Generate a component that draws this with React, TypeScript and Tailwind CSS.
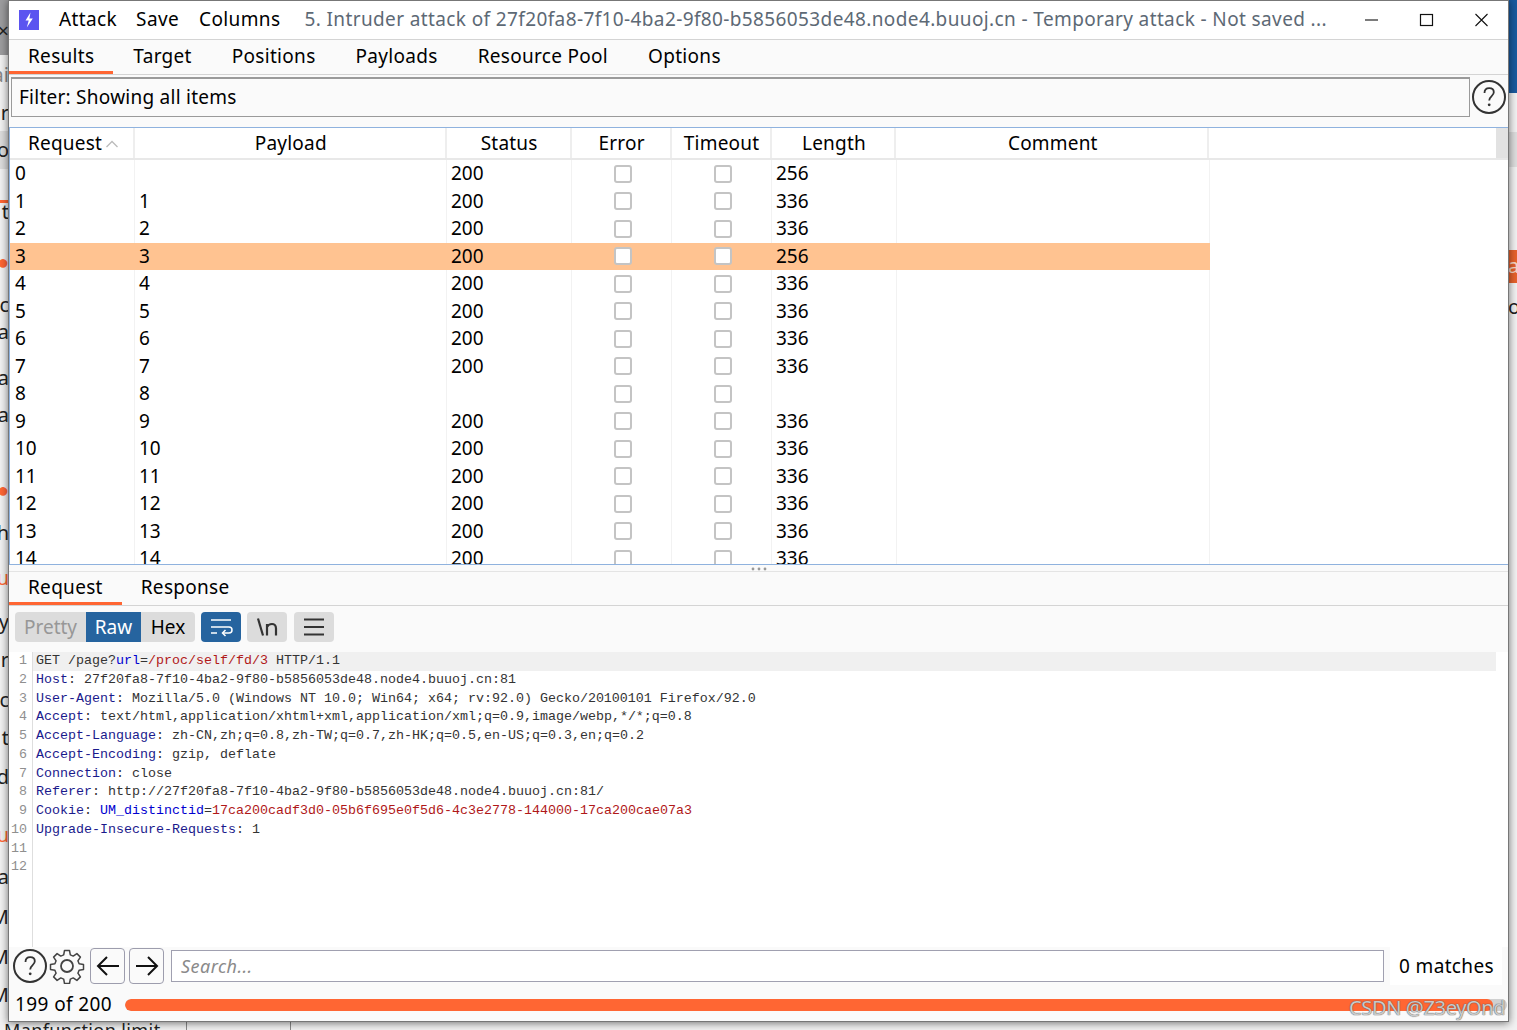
import React from "react";

const SANS = "font-['Noto_Sans','Open_Sans',sans-serif]";

const HelpIcon = () => (
  <svg width="36" height="36" viewBox="0 0 36 36" fill="none" className="shrink-0">
    <circle cx="18" cy="18" r="16" stroke="#333" strokeWidth="2" />
    <path d="M13.5 14c0-3 2-4.8 4.7-4.8 2.8 0 4.6 1.7 4.6 4.1 0 3.7-4.6 3.9-4.6 8.2" stroke="#333" strokeWidth="1.8" />
    <circle cx="18.2" cy="25.8" r="1.4" fill="#333" />
  </svg>
);

const GearIcon = () => (
  <svg width="36" height="36" viewBox="0 0 36 36" fill="none" className="shrink-0">
    <path
      d="M15.5 2.5h5l.8 4.4 2.9 1.2 3.7-2.5 3.5 3.5-2.5 3.7 1.2 2.9 4.4.8v5l-4.4.8-1.2 2.9 2.5 3.7-3.5 3.5-3.7-2.5-2.9 1.2-.8 4.4h-5l-.8-4.4-2.9-1.2-3.7 2.5-3.5-3.5 2.5-3.7-1.2-2.9-4.4-.8v-5l4.4-.8 1.2-2.9-2.5-3.7 3.5-3.5 3.7 2.5 2.9-1.2z"
      stroke="#444"
      strokeWidth="1.5"
      strokeLinejoin="round"
    />
    <circle cx="18" cy="18" r="6" stroke="#444" strokeWidth="1.8" />
  </svg>
);

const Checkbox = () => <div className="h-[18px] w-[18px] rounded-[3px] border-2 border-[#c4c4c4] bg-white" />;

const rows: [string, string, string, string][] = [
  ["0", "", "200", "256"],
  ["1", "1", "200", "336"],
  ["2", "2", "200", "336"],
  ["3", "3", "200", "256"],
  ["4", "4", "200", "336"],
  ["5", "5", "200", "336"],
  ["6", "6", "200", "336"],
  ["7", "7", "200", "336"],
  ["8", "8", "", ""],
  ["9", "9", "200", "336"],
  ["10", "10", "200", "336"],
  ["11", "11", "200", "336"],
  ["12", "12", "200", "336"],
  ["13", "13", "200", "336"],
  ["14", "14", "200", "336"],
];

const K = ({ children }: { children: React.ReactNode }) => <span className="text-[#1a1a8c]">{children}</span>;
const B = ({ children }: { children: React.ReactNode }) => <span className="text-[#0000d0]">{children}</span>;
const R = ({ children }: { children: React.ReactNode }) => <span className="text-[#b01818]">{children}</span>;

const codeLines: React.ReactNode[] = [
  <>GET /page?<B>url</B>=<R>/proc/self/fd/3</R> HTTP/1.1</>,
  <><K>Host</K>: 27f20fa8-7f10-4ba2-9f80-b5856053de48.node4.buuoj.cn:81</>,
  <><K>User-Agent</K>: Mozilla/5.0 (Windows NT 10.0; Win64; x64; rv:92.0) Gecko/20100101 Firefox/92.0</>,
  <><K>Accept</K>: text/html,application/xhtml+xml,application/xml;q=0.9,image/webp,*/*;q=0.8</>,
  <><K>Accept-Language</K>: zh-CN,zh;q=0.8,zh-TW;q=0.7,zh-HK;q=0.5,en-US;q=0.3,en;q=0.2</>,
  <><K>Accept-Encoding</K>: gzip, deflate</>,
  <><K>Connection</K>: close</>,
  <><K>Referer</K>: http://27f20fa8-7f10-4ba2-9f80-b5856053de48.node4.buuoj.cn:81/</>,
  <><K>Cookie</K>: <B>UM_distinctid</B>=<R>17ca200cadf3d0-05b6f695e0f5d6-4c3e2778-144000-17ca200cae07a3</R></>,
  <><K>Upgrade-Insecure-Requests</K>: 1</>,
  <></>,
  <></>,
];

const Frag = ({ top, children, color }: { top: number; children: string; color?: string }) => (
  <div
    className="absolute right-0 whitespace-nowrap text-[20px] leading-[24px]"
    style={{ top: top - 12, color: color ?? "#222" }}
  >
    {children}
  </div>
);

const HeadCell = ({ w, children }: { w: string; children: string }) => (
  <div className={`flex items-center justify-center border-r-2 border-[#eeeeee] pl-[2px] ${w}`}>{children}</div>
);

export default function App() {
  return (
    <div className={`relative h-[1030px] w-[1517px] overflow-hidden bg-[#f2f2f2] ${SANS}`}>
      {/* page behind the window */}
      <div className="absolute left-0 top-0 h-full w-[9px] overflow-hidden">
        <div className="absolute inset-x-0 top-0 h-[55px] bg-[#9c9c9e]" />
        <div className="absolute inset-x-0 top-[131px] h-[38px] bg-[#dcdcdc]" />
        <div className="absolute inset-x-0 top-[200px] h-[3px] bg-[#ff6633]" />
        <Frag top={31}>×</Frag>
        <Frag top={75} color="#888">ai</Frag>
        <Frag top={113}>ur</Frag>
        <Frag top={150}>o</Frag>
        <Frag top={212}>t</Frag>
        <Frag top={262} color="#ff6633">●</Frag>
        <Frag top={305}>rc</Frag>
        <Frag top={332}>a</Frag>
        <Frag top={378}>a</Frag>
        <Frag top={415}>a</Frag>
        <Frag top={490} color="#ff6633">●</Frag>
        <Frag top={533}>h</Frag>
        <Frag top={578} color="#ff6633">Nu</Frag>
        <Frag top={622}>y</Frag>
        <Frag top={660}>r</Frag>
        <Frag top={700}>c</Frag>
        <Frag top={738}>t</Frag>
        <Frag top={777}>Hd</Frag>
        <Frag top={835} color="#ff6633">Nu</Frag>
        <Frag top={877}>a</Frag>
        <Frag top={917}>M</Frag>
        <Frag top={957}>M</Frag>
        <Frag top={995}>M</Frag>
      </div>
      <div className="absolute right-0 top-0 h-full w-[9px] overflow-hidden">
        <div className="absolute inset-x-0 top-0 h-[93px] bg-[#1a5a9e]" />
        <div className="absolute inset-x-0 top-[132px] h-[35px] bg-[#dedede]" />
        <div className="absolute inset-x-0 top-[250px] h-[33px] bg-[#e8622c]" />
        <div className="absolute left-0 top-[254px] text-[20px] leading-[24px] text-[#f6d8c8]">a</div>
        <div className="absolute left-0 top-[295px] text-[20px] leading-[24px] text-[#222]">o</div>
      </div>
      <div className="absolute left-0 top-[1022px] flex h-[8px] w-full items-start overflow-hidden text-[18px] leading-[17px] text-[#222]">
        <span className="ml-[4px] w-[182px] shrink-0 whitespace-nowrap tracking-[0.4px]">Manfunction limit</span>
        <span className="h-full w-[104px] shrink-0 border-l border-[#8a8a8a]" />
        <span className="h-full border-l border-[#8a8a8a]" />
      </div>

      {/* window */}
      <div className="relative ml-[8px] flex h-[1022px] w-[1501px] flex-col border border-[#777] bg-[#fafafa] text-black shadow-[0_1px_8px_rgba(0,0,0,0.55)]">
        {/* title bar */}
        <div className="flex h-[38px] shrink-0 items-center bg-white pb-[2px] text-[19px] tracking-[0.38px]">
          <div className="ml-[10px] mt-[2px] flex h-[20px] w-[20px] items-center justify-center bg-[#5b54f0]">
            <svg width="12" height="16" viewBox="0 0 12 16">
              <path d="M7.5 0.5 2.5 8.5h3.2L3.8 15.5 9.8 6.6H6.4z" fill="#fff" />
            </svg>
          </div>
          <span className="ml-[20px]">Attack</span>
          <span className="ml-[19px]">Save</span>
          <span className="ml-[20px]">Columns</span>
          <span className="ml-[24px] w-[1026px] shrink-0 whitespace-nowrap text-[#5d6975]">
            5. Intruder attack of 27f20fa8-7f10-4ba2-9f80-b5856053de48.node4.buuoj.cn - Temporary attack - Not saved ...
          </span>
          <div className="flex flex-1 items-center justify-end">
            <svg width="140" height="16" viewBox="0 0 140 16" fill="none" stroke="#111" strokeWidth="1.1" className="mr-[17px] mt-[2px] shrink-0">
              <path d="M14 8h13" />
              <rect x="69.5" y="2.5" width="12" height="11" strokeWidth="1.2" />
              <path d="M124.5 2l12 12M136.5 2l-12 12" />
            </svg>
          </div>
        </div>

        {/* main tabs */}
        <div className="flex h-[36px] shrink-0 border-y border-[#d4d4d4] text-[19px] tracking-[0.3px]">
          <div className="flex h-full items-center border-b-[3px] border-[#ff6633] px-[19px] pt-[1px]">Results</div>
          <div className="flex items-center px-[20px] pb-[2px]">Target</div>
          <div className="flex items-center px-[20px] pb-[2px]">Positions</div>
          <div className="flex items-center px-[20px] pb-[2px]">Payloads</div>
          <div className="flex items-center px-[20px] pb-[2px]">Resource Pool</div>
          <div className="flex items-center px-[20px] pb-[2px]">Options</div>
        </div>

        {/* filter */}
        <div className="flex h-[52px] shrink-0 items-start pl-[2px] pt-[2px]">
          <div className="flex h-[40px] w-[1459px] items-center border border-t-2 border-[#9a9a9a] px-[7px] text-[19px] tracking-[0.25px]">
            Filter: Showing all items
          </div>
          <div className="ml-[1px] mt-[2px]">
            <HelpIcon />
          </div>
        </div>

        {/* results table */}
        <div className="h-[438px] shrink-0 overflow-hidden border-y border-l border-[#8fb2de] bg-white text-[19px]">
          <div className="flex h-[32px] border-b-2 border-[#e8e8e8] tracking-[0.2px]">
            <div className="flex w-[125px] items-center border-r-2 border-[#eeeeee] pl-[18px]">
              Request
              <svg width="14" height="8" viewBox="0 0 14 8" fill="none" stroke="#bbb" strokeWidth="1.3" className="ml-[3px] mt-[2px]">
                <path d="M1.5 7 7 1.5 12.5 7" />
              </svg>
            </div>
            <HeadCell w="w-[312px]">Payload</HeadCell>
            <HeadCell w="w-[125px]">Status</HeadCell>
            <HeadCell w="w-[100px]">Error</HeadCell>
            <HeadCell w="w-[100px]">Timeout</HeadCell>
            <HeadCell w="w-[125px]">Length</HeadCell>
            <HeadCell w="w-[313px]">Comment</HeadCell>
            <div className="w-[287px]" />
            <div className="w-[12px] bg-[#e2e2e2]" />
          </div>
          {rows.map((r) => {
            const sep = r[0] === "3" ? "border-transparent" : "border-[#f2f2f2]";
            return (
              <div
                key={r[0]}
                className={`flex h-[27.5px] w-[1200px] items-center ${r[0] === "3" ? "bg-[#ffc391]" : ""}`}
              >
                <div className={`flex h-full w-[125px] items-center border-r pb-[1px] pl-[5px] ${sep}`}>{r[0]}</div>
                <div className={`flex h-full w-[312px] items-center border-r pb-[1px] pl-[4px] ${sep}`}>{r[1]}</div>
                <div className={`flex h-full w-[125px] items-center border-r pb-[1px] pl-[4px] ${sep}`}>{r[2]}</div>
                <div className={`flex h-full w-[100px] items-center justify-center border-r pl-[3px] ${sep}`}><Checkbox /></div>
                <div className={`flex h-full w-[100px] items-center justify-center border-r pl-[3px] ${sep}`}><Checkbox /></div>
                <div className={`flex h-full w-[125px] items-center border-r pb-[1px] pl-[4px] ${sep}`}>{r[3]}</div>
                <div className={`h-full w-[313px] border-r ${sep}`} />
              </div>
            );
          })}
        </div>

        {/* splitter */}
        <div className="flex h-[7px] shrink-0 items-start justify-center border-b border-[#e4e4e4] pt-[2px]">
          <svg width="18" height="4" viewBox="0 0 18 4" fill="#999">
            <circle cx="3" cy="2" r="1.4" />
            <circle cx="9" cy="2" r="1.4" />
            <circle cx="15" cy="2" r="1.4" />
          </svg>
        </div>

        {/* request / response tabs */}
        <div className="flex h-[34px] shrink-0 border-b border-[#d4d4d4] text-[19px] tracking-[0.3px]">
          <div className="flex h-full items-center border-b-[3px] border-[#ff6633] px-[19px] pt-[1px]">Request</div>
          <div className="flex items-center px-[19px] pb-[2px]">Response</div>
        </div>

        {/* view buttons */}
        <div className="flex h-[46px] shrink-0 items-start gap-[6px] pl-[6px] pt-[6px] text-[19px]">
          <div className="flex h-[30px] overflow-hidden rounded-[4px] bg-[#dcdcdc]">
            <div className="flex w-[71px] items-center justify-center text-[#979797]">Pretty</div>
            <div className="flex w-[55px] items-center justify-center bg-[#26649f] text-white">Raw</div>
            <div className="flex w-[54px] items-center justify-center">Hex</div>
          </div>
          <div className="flex h-[30px] w-[40px] items-center justify-center rounded-[4px] bg-[#26649f]">
            <svg width="24" height="20" viewBox="0 0 24 20" fill="none" stroke="#fff" strokeWidth="1.5">
              <path d="M2 3h20M2 10h18a2.5 2.5 0 0 1 0 6h-6M2 16h6" />
              <path d="M16.5 13l-3 3 3 3" />
            </svg>
          </div>
          <div className="flex h-[30px] w-[40px] items-center justify-center rounded-[4px] bg-[#dcdcdc]">
            <svg width="24" height="20" viewBox="0 0 24 20" fill="none" stroke="#333" strokeWidth="2.2">
              <path d="M3 1.5 8 18.5" />
              <path d="M12 7v11.5M12 10c1-2 3-3 5-3s4 1.5 4 4.5v7" />
            </svg>
          </div>
          <div className="ml-[1px] flex h-[30px] w-[40px] items-center justify-center rounded-[4px] bg-[#dcdcdc]">
            <svg width="24" height="20" viewBox="0 0 24 20" fill="none" stroke="#333" strokeWidth="2">
              <path d="M2 2.5h20M2 10h20M2 17.5h20" />
            </svg>
          </div>
        </div>

        {/* code */}
        <div className="flex h-[295px] shrink-0 bg-white font-['Liberation_Mono',monospace] text-[13.33px] leading-[18.75px]">
          <div className="w-[24px] shrink-0 border-r border-[#dedede] pr-[5px] text-right text-[#8f8f8f]">
            {codeLines.map((_, i) => (
              <div key={i} className="h-[18.75px]">{i + 1}</div>
            ))}
          </div>
          <div className="flex-1 text-[#333]">
            {codeLines.map((l, i) => (
              <div
                key={i}
                className={`mr-[12px] h-[18.75px] whitespace-pre pl-[3px] ${i === 0 ? "bg-[#f0f0f0]" : ""}`}
              >
                {l}
              </div>
            ))}
          </div>
        </div>

        {/* search bar */}
        <div className="flex h-[39px] shrink-0 items-start pl-[3px] text-[19px]">
          <div className="mt-[1px] flex items-center">
            <HelpIcon />
            <div className="ml-[1px]"><GearIcon /></div>
          </div>
          <div className="ml-[5px] mt-[1px] flex h-[36px] w-[35px] items-center justify-center rounded-[4px] border border-[#9d9dad]">
            <svg width="24" height="22" viewBox="0 0 24 22" fill="none" stroke="#111" strokeWidth="2">
              <path d="M23 11H2M11 2 2 11l9 9" />
            </svg>
          </div>
          <div className="ml-[4px] mt-[1px] flex h-[36px] w-[35px] items-center justify-center rounded-[4px] border border-[#9d9dad]">
            <svg width="24" height="22" viewBox="0 0 24 22" fill="none" stroke="#111" strokeWidth="2">
              <path d="M1 11h21M13 2l9 9-9 9" />
            </svg>
          </div>
          <div className="ml-[7px] mt-[3px] flex h-[32px] w-[1213px] items-center border border-[#a0a0b0] bg-white px-[9px] text-[18px] italic tracking-[0.45px] text-[#8a8a8a]">
            Search...
          </div>
          <div className="ml-[6px] flex h-[38px] w-[112px] items-center justify-center bg-white pl-[1px] tracking-[0.35px]">0 matches</div>
        </div>

        {/* progress */}
        <div className="flex h-[34px] shrink-0 items-start pl-[6px] pt-[4px] text-[19px]">
          <span className="w-[110px] shrink-0 leading-[28px] tracking-[0.4px]">199 of 200</span>
          <div className="mt-[9px] flex h-[12px] w-[1382px] overflow-hidden rounded-full bg-[#d0d0d0]">
            <div className="h-full w-[1368px] rounded-full bg-[#ff6633]" />
          </div>
        </div>
      </div>

      {/* watermark */}
      <div className="absolute left-[1349px] top-[995px] whitespace-nowrap text-[20px] leading-[26px] tracking-[-0.35px] text-[#ffffff]/70 [text-shadow:0_0_1px_#555,0_0_1px_#555]">
        CSDN @Z3eyOnd
      </div>
    </div>
  );
}
